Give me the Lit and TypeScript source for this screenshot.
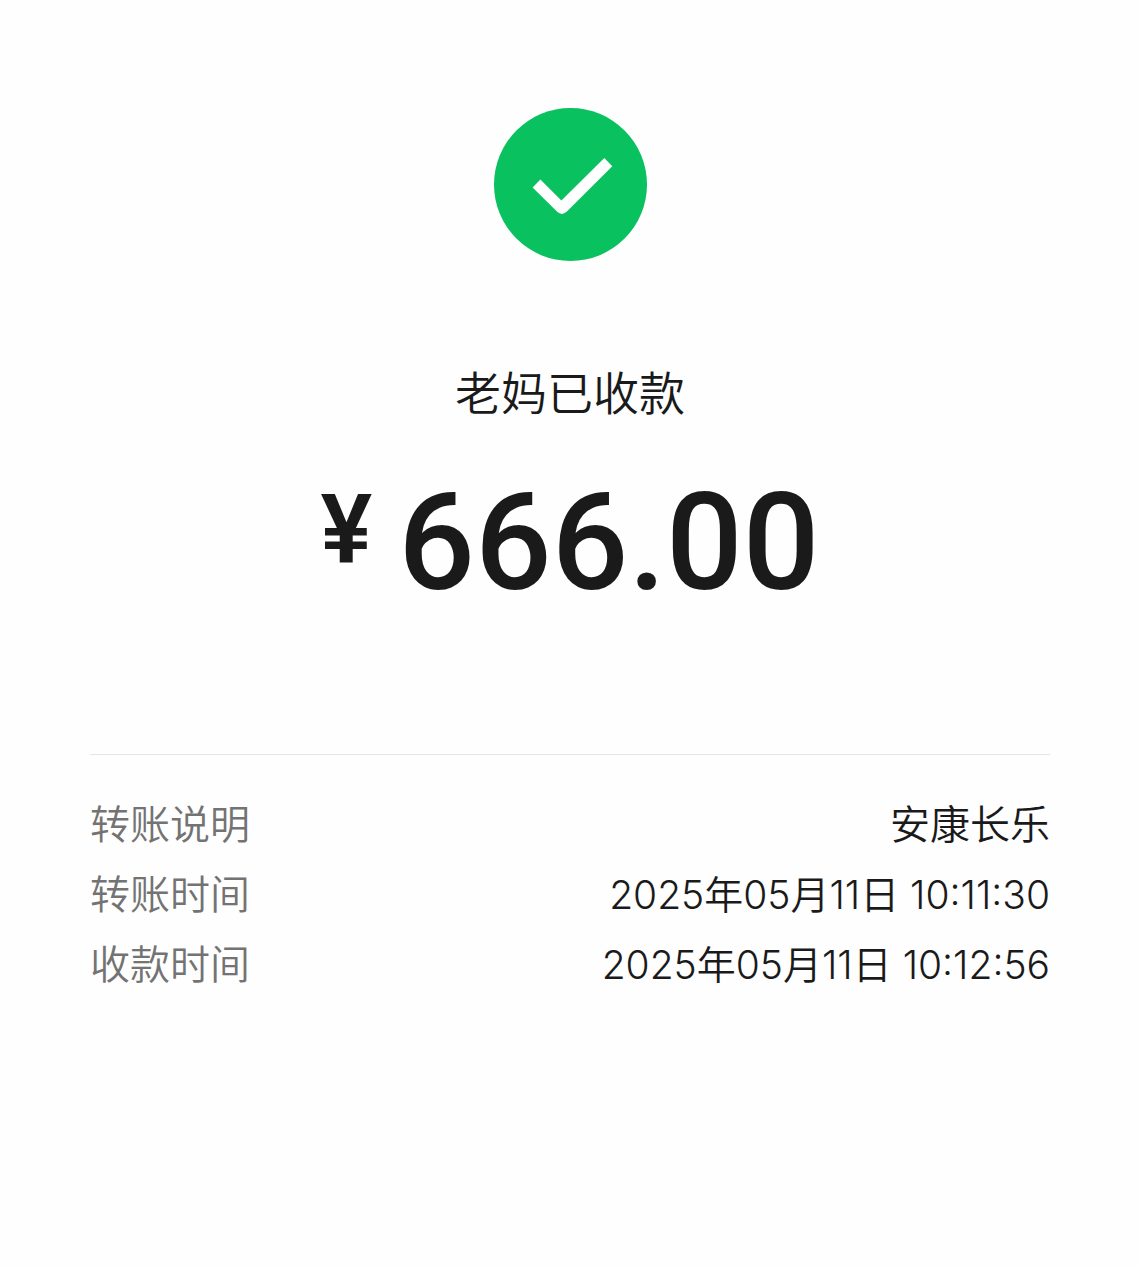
import { LitElement, html, css } from "lit";
import { customElement, state } from "lit/decorators.js";
import { classMap } from "lit/directives/class-map.js";

interface Detail {
  label: string;
  value: string;
  time?: boolean;
}

@customElement("app-root")
export class AppRoot extends LitElement {
  static styles = css`
    :host {
      display: block;
      min-height: 100vh;
      background: #fefefe;
      color: #1a1a1a;
      font-family: Inter, "Noto Sans CJK SC", sans-serif;
      font-weight: 350;
    }
    .page {
      display: flex;
      flex-direction: column;
      padding: 108px 90px 90px;
    }
    .summary {
      display: flex;
      flex-direction: column;
      align-items: center;
      padding-bottom: 132px;
    }
    .badge {
      display: block;
      width: 153px;
      height: 153px;
    }
    .status {
      margin: 94px 0 0;
      font-family: "Noto Sans CJK SC", sans-serif;
      font-size: 46px;
      line-height: 70px;
      font-weight: 350;
    }
    .amount {
      display: flex;
      align-items: flex-start;
      gap: 26px;
      margin: 39px 0 0;
      font-family: Roboto, sans-serif;
      font-weight: 500;
    }
    .currency {
      font-size: 97px;
      line-height: 132px;
      font-weight: 600;
    }
    .figure {
      font-size: 135px;
      line-height: 158px;
    }
    .details {
      margin: 0;
      padding: 35px 0;
      border-top: 1px solid #e5e5e5;
    }
    .row {
      display: flex;
      justify-content: space-between;
      font-size: 40px;
      line-height: 70px;
    }
    .label {
      color: #737373;
    }
    .value {
      margin: 0;
      text-align: right;
    }
    .time {
      font-size: 39px;
      font-weight: 360;
    }
  `;

  @state()
  private details: Detail[] = [
    { label: "转账说明", value: "安康长乐" },
    { label: "转账时间", value: "2025年05月11日 10:11:30", time: true },
    { label: "收款时间", value: "2025年05月11日 10:12:56", time: true },
  ];

  render() {
    return html`
      <main class="page" lang="zh-CN">
        <section class="summary">
          <svg class="badge" viewBox="0 0 153 153" aria-hidden="true">
            <circle cx="76.5" cy="76.5" r="76.5" fill="#0ac160" />
            <path
              fill="#fff"
              d="M38.6 79.6 46.4 71.6 67.4 92.4 110.3 50 118.3 58.2 72.6 103.8Q67.8 108 63.2 103.8Z"
            />
          </svg>
          <h1 class="status">老妈已收款</h1>
          <p class="amount">
            <span class="currency">¥</span><span class="figure">666.00</span>
          </p>
        </section>
        <dl class="details">
          ${this.details.map(
            (d) => html`
              <div class="row">
                <dt class="label">${d.label}</dt>
                <dd class=${classMap({ value: true, time: !!d.time })}>${d.value}</dd>
              </div>
            `,
          )}
        </dl>
      </main>
    `;
  }
}
